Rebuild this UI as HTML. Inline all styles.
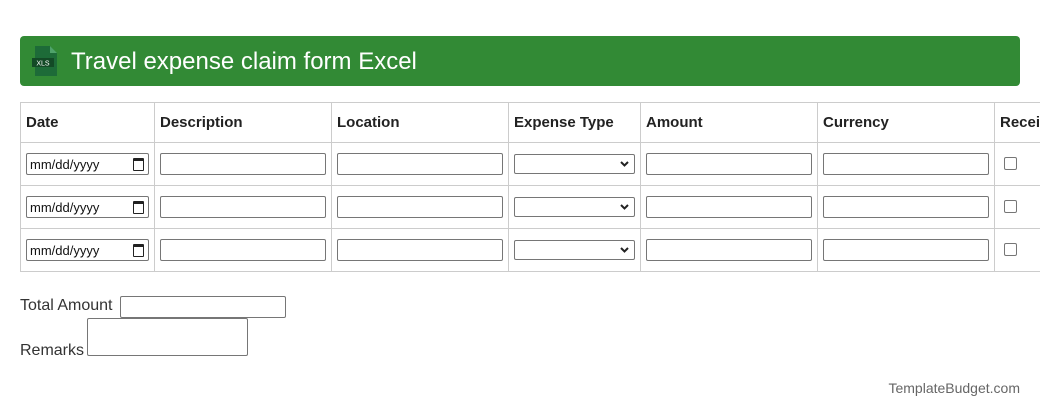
<!DOCTYPE html>
<html><head><style>
body{margin:0;width:1040px;height:417px;overflow:hidden;background:#fff;font-family:"Liberation Sans",sans-serif;color:#222;position:relative}
.a{position:absolute;box-sizing:border-box}
.hd{left:20px;top:36px;width:1000px;height:50px;background:#328a35;border-radius:4px}
.t{left:71px;top:48px;color:#fff;font-size:24px;white-space:nowrap}
.hl{height:1px;background:#ccc;left:20px;width:1020px}
.vl{width:1px;background:#ccc;top:102px;height:170px}
.th{top:114px;font-weight:bold;font-size:15px;color:#222}
.in{border:1px solid #767676;border-radius:2px;background:#fff;height:22px}
.cb{width:13px;height:13px;border:1px solid #767676;border-radius:2px}
.dt{font-size:13px;padding:3px 0 0 3px;color:#111}
.lb{font-size:16px;color:#333}
.ch{position:absolute;right:5px;top:6px}
</style></head><body>
<div class="a hd"></div>
<svg class="a" style="left:30px;top:45px" width="30" height="32" viewBox="0 0 30 32">
<path d="M5 1h15l7 7v23H5z" fill="#1d6b38"/><path d="M20 1v7h7z" fill="#4fa36a"/>
<rect x="2" y="13" width="22" height="9" fill="#134a26"/>
<text x="13" y="20.5" font-size="7" fill="#fff" text-anchor="middle" font-family="Liberation Sans">XLS</text></svg>
<div class="a t">Travel expense claim form Excel</div>
<div class="a hl" style="top:102px"></div><div class="a hl" style="top:142px"></div>
<div class="a hl" style="top:185px"></div><div class="a hl" style="top:228px"></div><div class="a hl" style="top:271px"></div>
<div class="a vl" style="left:20px"></div><div class="a vl" style="left:154px"></div><div class="a vl" style="left:331px"></div>
<div class="a vl" style="left:508px"></div><div class="a vl" style="left:640px"></div><div class="a vl" style="left:817px"></div><div class="a vl" style="left:994px"></div>
<div class="a th" style="left:26px">Date</div><div class="a th" style="left:160px">Description</div>
<div class="a th" style="left:337px">Location</div><div class="a th" style="left:514px">Expense Type</div>
<div class="a th" style="left:646px">Amount</div><div class="a th" style="left:823px">Currency</div>
<div class="a th" style="left:1000px">Receipt</div>

<div class="a in dt" style="left:26px;top:153px;width:123px">mm/dd/yyyy<span style="position:absolute;right:4px;top:4px;width:9px;height:9px;border:1.5px solid #222;border-top-width:3px;border-radius:1px"></span></div>
<div class="a in" style="left:160px;top:153px;width:166px"></div><div class="a in" style="left:337px;top:153px;width:166px"></div>
<div class="a in" style="left:514px;top:154px;width:121px;height:20px"><svg class="ch" width="9" height="6"><path d="M1 1l3.5 3.5L8 1" stroke="#222" stroke-width="2" fill="none"/></svg></div>
<div class="a in" style="left:646px;top:153px;width:166px"></div><div class="a in" style="left:823px;top:153px;width:166px"></div>
<div class="a cb" style="left:1004px;top:157px"></div>

<div class="a in dt" style="left:26px;top:196px;width:123px">mm/dd/yyyy<span style="position:absolute;right:4px;top:4px;width:9px;height:9px;border:1.5px solid #222;border-top-width:3px;border-radius:1px"></span></div>
<div class="a in" style="left:160px;top:196px;width:166px"></div><div class="a in" style="left:337px;top:196px;width:166px"></div>
<div class="a in" style="left:514px;top:197px;width:121px;height:20px"><svg class="ch" width="9" height="6"><path d="M1 1l3.5 3.5L8 1" stroke="#222" stroke-width="2" fill="none"/></svg></div>
<div class="a in" style="left:646px;top:196px;width:166px"></div><div class="a in" style="left:823px;top:196px;width:166px"></div>
<div class="a cb" style="left:1004px;top:200px"></div>

<div class="a in dt" style="left:26px;top:239px;width:123px">mm/dd/yyyy<span style="position:absolute;right:4px;top:4px;width:9px;height:9px;border:1.5px solid #222;border-top-width:3px;border-radius:1px"></span></div>
<div class="a in" style="left:160px;top:239px;width:166px"></div><div class="a in" style="left:337px;top:239px;width:166px"></div>
<div class="a in" style="left:514px;top:240px;width:121px;height:20px"><svg class="ch" width="9" height="6"><path d="M1 1l3.5 3.5L8 1" stroke="#222" stroke-width="2" fill="none"/></svg></div>
<div class="a in" style="left:646px;top:239px;width:166px"></div><div class="a in" style="left:823px;top:239px;width:166px"></div>
<div class="a cb" style="left:1004px;top:243px"></div>

<div class="a lb" style="left:20px;top:297px">Total Amount</div>
<div class="a in" style="left:120px;top:296px;width:166px"></div>
<div class="a lb" style="left:20px;top:342px">Remarks</div>
<div class="a in" style="left:87px;top:318px;width:161px;height:38px"></div>
<div class="a" style="right:20px;top:380px;font-size:14px;color:#666">TemplateBudget.com</div>
</body></html>
